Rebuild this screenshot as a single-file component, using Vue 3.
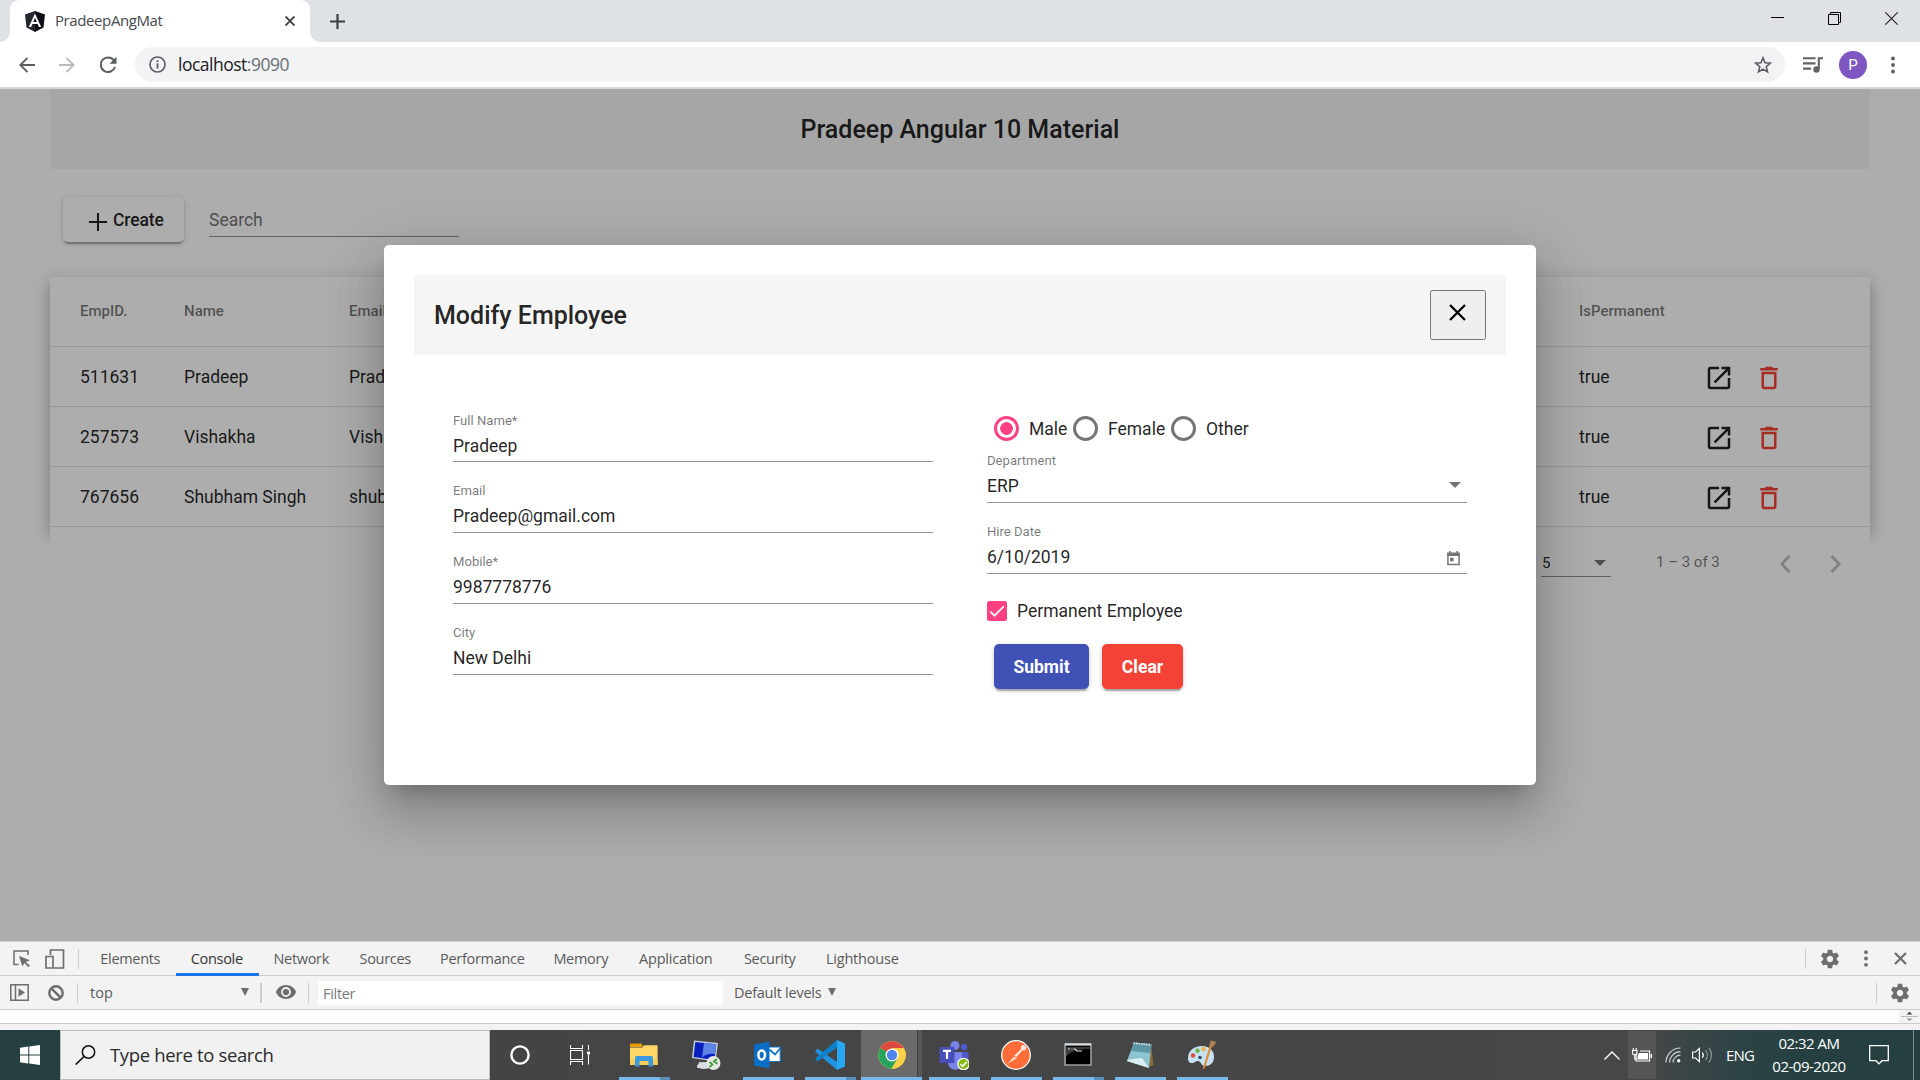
<script setup>
const rows = [
  { id: '511631', name: 'Pradeep', email: 'Pradeep@gmail.com' },
  { id: '257573', name: 'Vishakha', email: 'Vishakha@gmail.com' },
  { id: '767656', name: 'Shubham Singh', email: 'shubham@gmail.com' },
]
const fields = [
  { label: 'Full Name*', value: 'Pradeep', cls: 'first' },
  { label: 'Email', value: 'Pradeep@gmail.com', cls: 'clip' },
  { label: 'Mobile*', value: '9987778776', cls: '' },
  { label: 'City', value: 'New Delhi', cls: '' },
]
const tabs = [
  { t: 'Elements', w: 90, s: -0.32 },
  { t: 'Console', w: 83, s: -0.3, on: true },
  { t: 'Network', w: 86, s: -0.3 },
  { t: 'Sources', w: 82, s: -0.3 },
  { t: 'Performance', w: 112, s: -0.3 },
  { t: 'Memory', w: 85, s: -0.3 },
  { t: 'Application', w: 105, s: -0.2 },
  { t: 'Security', w: 83, s: -0.3 },
  { t: 'Lighthouse', w: 102, s: -0.2 },
]
</script>

<template>
  <div class="screen">
    <header class="browser">
      <div class="strip">
        <div class="tab">
          <svg class="fav" width="20" height="21" viewBox="0 0 20 21"><path d="M10 0 0 3.500 1.500 16.500 10 21z" fill="#23272f" /><path d="M10 0 20 3.500 18.500 16.500 10 21z" fill="#0b0e14" /><path d="M10 2.400 3.800 16h2.300l1.300-3.100h5.200l1.300 3.100h2.300zM8.200 11 10 6.700l1.800 4.300z" fill="#fff" /></svg>
          <span class="tab-name">PradeepAngMat</span>
          <svg class="tab-x" width="10" height="10" viewBox="0 0 10 10"><path d="M.5.500l9 9M9.500.500l-9 9" stroke="#3c4043" stroke-width="1.900" /></svg>
        </div>
        <svg class="plus" width="15" height="15" viewBox="0 0 15 15"><path d="M7.500 0v15M0 7.500h15" stroke="#3c4043" stroke-width="2.200" /></svg>
        <div class="win">
          <svg width="13" height="13" viewBox="0 0 13 13"><path d="M0 5.500h13" stroke="#000" /></svg>
          <svg width="13" height="13" viewBox="0 0 13 13"><path d="M.5 2.500h10v10H.5zM2.500 2.500V.5h10v10h-2" fill="none" stroke="#000" /></svg>
          <svg width="13" height="13" viewBox="0 0 13 13"><path d="M.3.300l12.400 12.400M12.700.300.3 12.700" stroke="#222" stroke-width="1.100" /></svg>
        </div>
      </div>
      <div class="bar">
        <svg class="nav" width="16" height="16" viewBox="0 0 16 16"><path d="M16 8H1.500M8.500.8 1.300 8l7.200 7.200" fill="none" stroke="#5a5d61" stroke-width="1.900" /></svg>
        <svg class="nav" width="16" height="16" viewBox="0 0 16 16"><path d="M0 8h14.500M7.500.8 14.700 8l-7.200 7.200" fill="none" stroke="#b9bbbe" stroke-width="1.900" /></svg>
        <svg class="nav" width="18" height="18" viewBox="0 0 18 18"><path d="M14.800 4.200A7.300 7.300 0 1 0 16 11" fill="none" stroke="#5a5d61" stroke-width="2" /><path d="M17.500.8v7h-7z" fill="#5a5d61" /></svg>
        <div class="omni">
          <svg width="17" height="17" viewBox="0 0 17 17"><circle cx="8.500" cy="8.500" r="7.500" fill="none" stroke="#5f6368" stroke-width="1.700" /><path d="M8.500 7.300v5.200M8.500 4.200v1.900" stroke="#5f6368" stroke-width="1.900" /></svg>
          <span class="url">localhost<i>:9090</i></span>
          <svg class="star" width="18" height="18" viewBox="0 0 18 18"><path d="M9 1.800l2 5 5.300.4-4.100 3.500 1.300 5.200L9 13.100l-4.500 2.800 1.300-5.200-4.100-3.500L7 6.800z" fill="none" stroke="#5a5d61" stroke-width="1.600" /></svg>
        </div>
        <svg class="queue" width="20" height="16" viewBox="0 0 20 16"><path d="M0 1.200h12.500M0 6.400h12.500M0 11.600h8M15.800 12V1.200H20" fill="none" stroke="#5f6368" stroke-width="2.100" /><circle cx="13.500" cy="12.500" r="3.200" fill="#5f6368" /></svg>
        <span class="avatar">P</span>
        <svg class="more" width="4" height="18" viewBox="0 0 4 18"><g fill="#5a5d61"><circle cx="2" cy="2.500" r="1.900" /><circle cx="2" cy="9" r="1.900" /><circle cx="2" cy="15.500" r="1.900" /></g></svg>
      </div>
    </header>

    <main class="page">
      <h1 class="app-title">Pradeep Angular 10 Material</h1>
      <div class="tools">
        <div class="create">
          <svg width="18" height="18" viewBox="0 0 18 18"><path d="M9 0v18M0 9h18" stroke="#000" stroke-opacity=".87" stroke-width="2" /></svg>
          <span>Create</span>
        </div>
        <div class="search">Search</div>
      </div>
      <section class="table">
        <div class="tr head"><span class="c1">EmpID.</span><span class="c2">Name</span><span class="c3">Email</span><span class="c4">IsPermanent</span></div>
        <div v-for="r in rows" :key="r.id" class="tr">
          <span class="c1">{{ r.id }}</span><span class="c2">{{ r.name }}</span><span class="c3">{{ r.email }}</span><span class="c4">true</span>
          <svg class="open" width="30" height="30" viewBox="0 0 24 24"><path d="M19 19H5V5h7V3H5c-1.110 0-2 .9-2 2v14c0 1.100.89 2 2 2h14c1.100 0 2-.9 2-2v-7h-2v7zM14 3v2h3.590l-9.830 9.830 1.410 1.410L19 6.410V10h2V3h-7z" fill="#212121" /></svg>
          <svg class="bin" width="30" height="30" viewBox="0 0 24 24"><path d="M6 19c0 1.100.9 2 2 2h8c1.100 0 2-.9 2-2V7H6v12zM8 9h8v10H8V9zm7.500-5l-1-1h-5l-1 1H5v2h14V4z" fill="#f44336" /></svg>
        </div>
      </section>
      <div class="pager">
        <div class="size"><span>5</span><i class="caret"></i></div>
        <span class="range">1 – 3 of 3</span>
        <svg class="prev" width="11" height="18" viewBox="0 0 11 18"><path d="M9.500 1 1.800 9l7.700 8" fill="none" stroke="#bdbdbd" stroke-width="2.600" /></svg>
        <svg width="11" height="18" viewBox="0 0 11 18"><path d="M1.500 1l7.700 8-7.700 8" fill="none" stroke="#bdbdbd" stroke-width="2.600" /></svg>
      </div>

      <div class="backdrop">
        <div class="dialog">
          <div class="dlg-head">
            <h2>Modify Employee</h2>
            <div class="close"><svg width="17" height="17" viewBox="0 0 17 17"><path d="M1 1l15 15M16 1 1 16" stroke="#000" stroke-width="2.300" /></svg></div>
          </div>
          <div class="form">
            <div class="col">
              <div v-for="f in fields" :key="f.label" class="field" :class="f.cls"><label>{{ f.label }}</label><div class="val"><span>{{ f.value }}</span></div></div>
            </div>
            <div class="col right">
              <div class="radios">
                <span class="radio on"></span><span class="rt r1">Male</span>
                <span class="radio"></span><span class="rt r2">Female</span>
                <span class="radio"></span><span class="rt">Other</span>
              </div>
              <div class="field dept"><label>Department</label><div class="val"><span>ERP</span><i class="caret"></i></div></div>
              <div class="field"><label>Hire Date</label><div class="val"><span>6/10/2019</span>
                <svg class="cal" width="13" height="15" viewBox="0 0 13 15"><path d="M.9 2.300h11.200v11.300H.9z" fill="none" stroke="#757575" stroke-width="1.500" /><path d="M.5 2h12v3H.5zM2 0h1.600v3H2zM9.400 0H11v3H9.400zM3 6.800h3.600v3.500H3z" fill="#757575" /></svg></div></div>
              <div class="check"><span class="box"><svg width="20" height="20" viewBox="0 0 24 24"><path d="M4.100 12.700 9 17.600 20.300 6.300" fill="none" stroke="#fff" stroke-width="2.100" /></svg></span>Permanent Employee</div>
              <div class="actions"><span class="btn submit">Submit</span><span class="btn clear">Clear</span></div>
            </div>
          </div>
        </div>
      </div>
    </main>

    <section class="dev">
      <div class="dev-tabs">
        <svg class="inspect" width="18" height="17" viewBox="0 0 18 17"><path d="M5.500 14.500H1V1h14v4" fill="none" stroke="#6e6e6e" stroke-width="1.500" /><path d="M6 6l11 4.300-4.200 1.800 4.200 3.700-1.600 1.300-4-4.100-2 3.500z" fill="#6e6e6e" /></svg>
        <svg class="device" width="20" height="20" viewBox="0 0 20 20"><path d="M5.500 6V1H18.500v18H9M1 7.500h7V19H1z" fill="none" stroke="#6e6e6e" stroke-width="1.700" /></svg>
        <i class="sep"></i>
        <div class="names"><span v-for="t in tabs" :key="t.t" :class="{ on: t.on }" :style="{ width: t.w + 'px', letterSpacing: t.s + 'px' }">{{ t.t }}</span></div>
        <i class="sep"></i>
        <svg class="gear" width="22" height="22" viewBox="0 0 24 24"><path d="M19.430 12.980c.04-.32.070-.64.070-.98s-.03-.66-.07-.98l2.110-1.650c.19-.15.24-.42.12-.64l-2-3.460c-.12-.22-.39-.3-.61-.22l-2.490 1c-.52-.4-1.080-.73-1.690-.98l-.38-2.650C14.460 2.180 14.250 2 14 2h-4c-.25 0-.46.18-.49.42l-.38 2.650c-.61.25-1.170.59-1.690.98l-2.490-1c-.23-.09-.49 0-.61.22l-2 3.460c-.13.22-.07.49.12.64l2.110 1.650c-.04.32-.07.65-.07.98s.03.66.07.98l-2.110 1.650c-.19.15-.24.42-.12.64l2 3.460c.12.22.39.3.61.22l2.490-1c.52.4 1.080.73 1.690.98l.38 2.650c.03.24.24.42.49.42h4c.25 0 .46-.18.49-.42l.38-2.650c.61-.25 1.170-.59 1.690-.98l2.490 1c.23.09.49 0 .61-.22l2-3.460c.12-.22.07-.49-.12-.64l-2.110-1.650zM12 15.500c-1.930 0-3.500-1.570-3.500-3.500s1.570-3.500 3.500-3.500 3.500 1.570 3.500 3.500-1.570 3.500-3.500 3.500z" fill="#6e6e6e" /></svg>
        <svg class="dots" width="4" height="17" viewBox="0 0 4 17"><g fill="#6e6e6e"><circle cx="2" cy="2.200" r="1.900" /><circle cx="2" cy="8.500" r="1.900" /><circle cx="2" cy="14.800" r="1.900" /></g></svg>
        <svg class="dx" width="13" height="13" viewBox="0 0 13 13"><path d="M1 1l11 11M12 1 1 12" stroke="#6e6e6e" stroke-width="2.200" /></svg>
      </div>
      <div class="dev-bar">
        <svg class="side" width="19" height="17" viewBox="0 0 19 17"><path d="M.8.800h17.400v15.400H.8zM5.500 1v15" fill="none" stroke="#6e6e6e" stroke-width="1.500" /><path d="M8.500 4.200 15 8.500l-6.500 4.300z" fill="#6e6e6e" /></svg>
        <svg class="ban" width="16" height="16" viewBox="0 0 16 16"><circle cx="8" cy="8" r="6.700" fill="none" stroke="#6e6e6e" stroke-width="2.500" /><path d="M3.300 3.300l9.400 9.400" stroke="#6e6e6e" stroke-width="2.500" /></svg>
        <i class="sep"></i>
        <span class="top">top</span><i class="tri"></i>
        <i class="sep s2"></i>
        <svg class="eye" width="20" height="14" viewBox="0 0 20 14"><path d="M10 0C5 0 1.300 3 0 7c1.300 4 5 7 10 7s8.700-3 10-7c-1.300-4-5-7-10-7z" fill="#6e6e6e" /><circle cx="10" cy="7" r="4" fill="none" stroke="#f3f3f3" stroke-width="1.800" /></svg>
        <i class="sep s3"></i>
        <span class="filter">Filter</span>
        <span class="levels">Default levels</span><i class="tri t2"></i>
        <i class="sep s4"></i>
        <svg width="22" height="22" viewBox="0 0 24 24"><path d="M19.430 12.980c.04-.32.070-.64.070-.98s-.03-.66-.07-.98l2.110-1.650c.19-.15.24-.42.12-.64l-2-3.460c-.12-.22-.39-.3-.61-.22l-2.490 1c-.52-.4-1.080-.73-1.690-.98l-.38-2.650C14.460 2.180 14.250 2 14 2h-4c-.25 0-.46.18-.49.42l-.38 2.650c-.61.25-1.170.59-1.690.98l-2.490-1c-.23-.09-.49 0-.61.22l-2 3.460c-.13.22-.07.49.12.64l2.110 1.650c-.04.32-.07.65-.07.98s.03.66.07.98l-2.110 1.650c-.19.15-.24.42-.12.64l2 3.460c.12.22.39.3.61.22l2.490-1c.52.4 1.080.73 1.690.98l.38 2.650c.03.24.24.42.49.42h4c.25 0 .46-.18.49-.42l.38-2.650c.61-.25 1.170-.59 1.690-.98l2.490 1c.23.09.49 0 .61-.22l2-3.460c.12-.22.07-.49-.12-.64l-2.110-1.650zM12 15.500c-1.930 0-3.500-1.570-3.500-3.500s1.570-3.500 3.500-3.500 3.500 1.570 3.500 3.500-1.570 3.500-3.500 3.500z" fill="#6e6e6e" /></svg>
      </div>
      <div class="dev-out"><div class="scroll"><svg width="17" height="13" viewBox="0 0 17 13"><path d="M5.500 4.500 8.500 1.700l3 2.800z" fill="#444" /><path d="M0 6.500h17" stroke="#bbb" /><path d="M5.500 8.500l3 2.700 3-2.700z" fill="#999" /></svg></div></div>
    </section>

    <footer class="task">
      <div class="start"><svg width="20" height="20" viewBox="0 0 20 20"><path d="M0 2.800 8.300 1.600v7.900H0zM9.300 1.400 20 0v9.500H9.300zM0 10.500h8.300v7.900L0 17.200zM9.300 10.500H20V20L9.300 18.600z" fill="#fff" /></svg></div>
      <div class="find"><svg width="21" height="20" viewBox="0 0 21 20"><circle cx="13.500" cy="7" r="6.200" fill="none" stroke="#111" stroke-width="1.500" /><path d="M9 11.500.7 19.500" stroke="#111" stroke-width="1.700" /></svg><span>Type here to search</span></div>
      <div class="sys"><svg width="20" height="20" viewBox="0 0 20 20"><circle cx="10" cy="10" r="8.600" fill="none" stroke="#fff" stroke-width="2.400" /></svg></div>
      <div class="sys"><svg width="20" height="20" viewBox="0 0 20 20"><path d="M.5 0v3.500h12V0M.5 20v-3.500h12V20M.5 5.500h12v9H.5zM18.500 0v5M18.500 10v9.500" fill="none" stroke="#fff" stroke-width="1.100" /><path d="M17 6.500h3v3h-3z" fill="#fff" /></svg></div>

      <div class="app go split"><svg width="30" height="30" viewBox="0 0 30 30"><path d="M1 3.500h11.500l1.500 3.500H1z" fill="#e49b08" /><path d="M1 7.500h12.500l1.500-2.200H28a.6.600 0 0 1 .6.600V25H1z" fill="#fdd665" /><path d="M1 20h27.600v5H1z" fill="#f9cd55" /><path d="M6 26.500V18a2 2 0 0 1 2-2h14a2 2 0 0 1 2 2v8.500h-4.500v-5.500h-9v5.500z" fill="#3b99e0" /></svg></div>
      <div class="app"><svg width="30" height="30" viewBox="0 0 30 30"><path d="M8 22h9l2 6H6z" fill="#c9ced6" /><ellipse cx="13" cy="26" rx="7" ry="3" fill="#d8dbe0" /><path d="M3 .5 27 3 24.500 21.500 1 18z" fill="#c7d0dd" /><path d="M4.300 2 25.300 4.200 23.300 20 2.600 16.900z" fill="#0a1fc0" /><path d="M13 2.900 25.300 4.200 24 14Q15 13 11 18z" fill="#5b84e4" /><circle cx="22.500" cy="23" r="7" fill="#e4e7e2" /><path d="M18.500 22l3 2.500-3 2.700M26 19l-3 2.500 3.500 2.200" fill="none" stroke="#3a9b35" stroke-width="1.700" /></svg></div>
      <div class="app go"><svg width="30" height="30" viewBox="0 0 30 30"><path d="M15 7h12.300v14.500H15z" fill="#fff" stroke="#0a72c7" stroke-width="1.200" /><path d="M16.500 9.500l5.500 5L27.500 8" fill="none" stroke="#0a72c7" stroke-width="1.700" /><path d="M1 4.500 16.500 1.500v27L1 25.500z" fill="#0a6ec4" /><ellipse cx="8.700" cy="15" rx="3.300" ry="4.500" fill="none" stroke="#fff" stroke-width="2.500" /></svg></div>
      <div class="app go split"><svg width="30" height="30" viewBox="0 0 30 30"><path d="M22 30 0 11.500 2.500 8.500 22 22z" fill="#1f94e0" /><path d="M22 0 0 18.500l2.500 3 19.500-14z" fill="#0f7fc8" /><path d="M22 0 30 3.500v23L22 30z" fill="#27a7f2" /></svg></div>
      <div class="app go active split"><svg width="28" height="28" viewBox="0 0 28 28"><circle cx="14" cy="14" r="13.700" fill="#fbcf46" /><path d="M14 14 2.200 7.100A13.700 13.700 0 0 1 25.900 7.200H14z" fill="#db4a3c" /><path d="M14 14 2.200 7.100A13.700 13.700 0 0 0 13.500 27.700L20 17z" fill="#28a35b" /><path d="M14 7.200h11.900A13.700 13.700 0 0 1 13.500 27.700L20 17z" fill="#fbcf46" /><circle cx="14" cy="14" r="6.500" fill="#fff" /><circle cx="14" cy="14" r="5.200" fill="#4c86ee" /></svg></div>
      <div class="app go"><svg width="30" height="30" viewBox="0 0 30 30"><circle cx="16" cy="5.500" r="4.500" fill="#7b83eb" /><circle cx="25" cy="7" r="3.200" fill="#5059c9" /><path d="M20 12h9.500v9a5 5 0 0 1-9 2z" fill="#5059c9" /><path d="M9 12h14v9a7 7 0 0 1-14 3z" fill="#7b83eb" /><path d="M.5 7h15v16H.5z" fill="#464eb8" /><path d="M4 10.800h8M8 10.800V19" stroke="#fff" stroke-width="2.200" /><circle cx="24.500" cy="24" r="5.700" fill="#86b810" stroke="#fff" stroke-width="1.200" /><path d="M21.500 24l2.200 2.300 4-4.300" fill="none" stroke="#fff" stroke-width="1.800" /></svg></div>
      <div class="app go"><svg width="30" height="30" viewBox="0 0 30 30"><circle cx="15" cy="15" r="14.300" fill="#ff6c37" stroke="#fff" stroke-width="1.300" /><path d="M6.500 24l6-7 3.500 1-4 2.500zM13 16l7.500-7.500 1.500 1.500-6.500 7z" fill="#fde4d9" /><circle cx="22.500" cy="7.700" r="2.600" fill="#fde4d9" /></svg></div>
      <div class="app go split"><svg width="30" height="30" viewBox="0 0 30 30"><path d="M2 4h26v21H2z" fill="#000" stroke="#9aa0a6" stroke-width="1.600" /><path d="M2 4.500h26" stroke="#d7dce0" stroke-width="2.200" /><path d="M3 7h24v2C14 9 8 11 3 17z" fill="#3a3a3a" /><path d="M5 9h2M8.500 9h1M11 8.500l3 2.500h5" fill="none" stroke="#ddd" stroke-width="1.200" /></svg></div>
      <div class="app go"><svg width="30" height="30" viewBox="0 0 30 30"><path d="M26 4 28.500 25 24 27z" fill="#8b6b3a" /><path d="M9 2.500 26.500 4 24 28 2 21z" fill="#8cc5cf" /><path d="M9 2.500 26.500 4 25.500 13 6 11z" fill="#5b98a4" /><path d="M2.800 19.500 17 18l7 10L2 21z" fill="#dceef1" /><path d="M8.500 3.200 26 5" stroke="#dfe7e8" stroke-width="1.500" stroke-dasharray="1.500 1" /></svg></div>
      <div class="app go"><svg width="30" height="30" viewBox="0 0 30 30"><path d="M1 18C1 10 8 6 15 6c8 0 12 5 12 11s-4 9-9 9c-4 0-4-5-7-5s-3 2-6 2-4-2-4-5z" fill="#c5e1f5" /><circle cx="6" cy="15.500" r="2.200" fill="#df4b3d" /><circle cx="10.500" cy="10.800" r="2.200" fill="#6db33f" /><circle cx="16.500" cy="9" r="2.200" fill="#f2b13c" /><circle cx="13" cy="17.500" r="1.800" fill="#3b4a59" /><path d="M15.500 29.500 23 5l2 1-7 22z" fill="#e08a32" /><path d="M22 6 24 .5l5.500 1.500L26 7z" fill="#b08050" /></svg></div>

      <div class="tray">
        <svg class="chev" width="16" height="9" viewBox="0 0 16 9"><path d="M.5 8.500 8 1l7.500 7.500" fill="none" stroke="#fff" stroke-width="1.400" /></svg>
        <div class="bat"><svg width="20" height="14" viewBox="0 0 20 14"><path d="M4 5.500V13h13.500V3H8" fill="none" stroke="#fff" stroke-width="1.200" /><path d="M7 5h9v6.500H5.500V8zM18.500 6H20v4h-1.500z" fill="#fff" /><path d="M.5 2.500h4.500v2.200a2.200 2.200 0 0 1-4.500 0zM1.300 0v2.500M4.200 0v2.500M2.700 6.500V11H5" fill="none" stroke="#fff" stroke-width="1.100" /></svg></div>
        <svg class="wifi" width="16" height="16" viewBox="0 0 16 16"><g fill="none" stroke="#c9cfcf" stroke-width="1.200"><path d="M1 15.500A14.500 14.500 0 0 1 15.500 1" /><path d="M4.500 15.500A11 11 0 0 1 15.500 4.700" /><path d="M8 15.500a7.500 7.500 0 0 1 7.500-7.300" /></g><circle cx="13.700" cy="13.700" r="1.700" fill="#fff" /></svg>
        <svg class="vol" width="21" height="18" viewBox="0 0 21 18"><path d="M.6 6h3L7.400 2.300v13.400L3.600 12h-3z" fill="none" stroke="#fff" stroke-width="1.200" /><path d="M10.300 6.500a4 4 0 0 1 0 5" fill="none" stroke="#fff" stroke-width="1.200" /><path d="M13.500 4a8 8 0 0 1 0 10M16.800 1.500a12 12 0 0 1 0 15" fill="none" stroke="#8d9a9a" stroke-width="1.200" /></svg>
        <span class="eng">ENG</span>
        <div class="clock"><span>02:32 AM</span><span>02-09-2020</span></div>
        <svg class="note" width="20" height="20" viewBox="0 0 20 20"><path d="M.7.700h18.600v15H13l-3 3.200-3-3.200H.7z" fill="none" stroke="#fff" stroke-width="1.300" /></svg>
      </div>
    </footer>
  </div>
</template>

<style>
body { margin: 0; overflow: hidden; }
</style>
<style scoped>
* { box-sizing: border-box; }
svg { display: block; flex: none; }
i { font-style: normal; }
.screen { width: 1920px; height: 1080px; display: flex; flex-direction: column; overflow: hidden; font-family: Roboto, sans-serif; white-space: nowrap; }
.browser, .dev, .task { font-family: "Open Sans", "Noto Sans", sans-serif; flex: none; }
.strip { height: 42px; background: #dee1e6; display: flex; padding-left: 10px; }
.tab { width: 300px; background: #fff; border-radius: 9px 9px 0 0; display: flex; align-items: center; padding: 0 15px; position: relative; }
.tab::before, .tab::after { content: ""; position: absolute; bottom: 0; width: 10px; height: 10px; }
.tab::before { left: -10px; background: radial-gradient(circle at 0 0, transparent 9.500px, #fff 10px); }
.tab::after { right: -10px; background: radial-gradient(circle at 100% 0, transparent 9.500px, #fff 10px); }
.tab-name { font-size: 15px; letter-spacing: -.4px; color: #45494d; margin-left: 10px; flex: 1; padding-bottom: 2px; }
.plus { margin: 14px 0 0 20px; }
.win { margin-left: auto; display: flex; gap: 44px; padding: 12px 22px 0 0; }
.bar { height: 47px; background: #fff; border-bottom: 2px solid #d7d8dd; display: flex; align-items: center; padding-left: 19px; }
.nav { margin-right: 24px; }
.nav + .nav + .nav { margin: 0 18px 0 0; }
.omni { width: 1650px; height: 35px; border-radius: 18px; background: #f1f3f4; display: flex; align-items: center; padding: 0 13px 0 14px; }
.url { font-size: 17.500px; letter-spacing: -.5px; margin-left: 12px; color: #202124; flex: 1; padding-bottom: 2px; }
.url i { color: #6c7074; }
.queue { margin-left: 18px; }
.avatar { width: 28px; height: 28px; margin-left: 16px; border-radius: 50%; background: #7e57c2; color: #fff; font: 15px/28px Roboto, sans-serif; text-align: center; }
.more { margin-left: 24px; }

.page { height: 852px; flex: none; background: #fff; position: relative; overflow: hidden; padding: 0 50px; color: rgba(0,0,0,.87); }
.app-title { height: 80px; margin: 0; background: #f5f5f5; font-size: 25px; font-weight: 500; line-height: 82px; text-align: center; }
.tools { display: flex; padding: 28px 0 0 13px; }
.create { width: 121px; height: 45px; border-radius: 5px; box-shadow: 0 4px 1px -2px rgba(0,0,0,.2), 0 2px 3px rgba(0,0,0,.14), 0 1px 6px rgba(0,0,0,.12); display: flex; align-items: center; padding-left: 26px; font-size: 17.500px; font-weight: 500; gap: 6px; letter-spacing: -.1px; }
.create svg { margin-top: 4px; }
.search { width: 250px; margin-left: 25px; height: 40px; border-bottom: 1px solid #8f8f8f; font-size: 17.500px; line-height: 46px; color: #757575; }
.table { margin-top: 35px; background: #fff; box-shadow: 0 6px 6px -4px rgba(0,0,0,.2), 0 10px 12px 1px rgba(0,0,0,.14), 0 4px 17px 3px rgba(0,0,0,.12); }
.tr { height: 60px; border-bottom: 1px solid #e0e0e0; display: flex; align-items: center; padding-left: 30px; font-size: 17.500px; }
.head { height: 70px; font-size: 15px; font-weight: 500; color: rgba(0,0,0,.54); padding-bottom: 2px; }
.c1 { width: 104px; } .c2 { width: 165px; } .c3 { width: 1230px; } .c4 { width: 125px; }
.open { margin: 2px 20px 0 0; } .bin { margin-top: 2px; }
.pager { position: relative; height: 70px; background: #fff; display: flex; align-items: center; padding-left: 1491px; font-size: 15px; color: rgba(0,0,0,.54); }
.size { width: 70px; height: 34px; margin-top: -5px; border-bottom: 1px solid #8f8f8f; display: flex; align-items: center; justify-content: space-between; padding: 7px 5px 0 1px; color: rgba(0,0,0,.87); }
.caret { border: 6.300px solid transparent; border-bottom: 0; border-top-color: #757575; }
.range { margin-left: 45px; width: 124px; }
.prev { margin-right: 39px; }
.pager svg { margin-top: 3px; }
.backdrop { position: absolute; inset: 0; background: rgba(0,0,0,.32); display: flex; justify-content: center; padding-top: 156px; }
.dialog { width: 1152px; height: 540px; background: #fff; border-radius: 5px; padding: 30px; box-shadow: 0 14px 19px -9px rgba(0,0,0,.2), 0 30px 48px 4px rgba(0,0,0,.14), 0 11px 58px 10px rgba(0,0,0,.12); }
.dlg-head { height: 80px; background: #f5f5f5; display: flex; align-items: center; justify-content: space-between; padding: 0 20px; }
h2 { margin: 0; font-size: 25px; font-weight: 500; }
.close { width: 56px; height: 50px; border: 1px solid #767676; border-radius: 2.500px; background: #efefef; display: flex; justify-content: center; padding: 13px 1px 0 0; }
.form { display: flex; padding: 37px 39px 0; gap: 54px; font-size: 17.500px; }
.col { width: 480px; }
.field { height: 71px; border-bottom: 1px solid #949494; display: flex; flex-direction: column; justify-content: flex-end; padding-bottom: 4px; }
.field.first { height: 70px; padding-bottom: 3px; }
.field label { font-size: 13.100px; line-height: 18px; color: rgba(0,0,0,.54); margin-bottom: 4px; }
.val { line-height: 24px; height: 24px; display: flex; justify-content: space-between; align-items: center; }
.clip .val { clip-path: inset(0 0 2.500px 0); }
.val .caret { margin: -2px 6px 0 0; }
.cal { margin: 2px 7px 0 0; }
.right { padding-top: 20px; }
.radios { height: 32px; display: flex; align-items: center; padding-left: 7px; }
.radio { width: 25px; height: 25px; border: 3px solid #757575; border-radius: 50%; margin-right: 10px; }
.radio.on { border-color: #ff4081; background: radial-gradient(circle, #ff4081 6px, #fff 6.600px); }
.rt { padding-top: 1px; }
.r1 { width: 44px; } .r2 { width: 63px; }
.field.dept { height: 59px; }
.check { display: flex; align-items: center; margin-top: 27px; height: 20px; }
.box { width: 20px; height: 20px; background: #ff4081; border-radius: 2.500px; margin-right: 10px; }
.actions { display: flex; gap: 13px; padding: 23px 0 0 7px; }
.btn { height: 45px; line-height: 46px; border-radius: 5px; color: #fff; font-weight: 700; text-align: center; box-shadow: 0 4px 1px -2px rgba(0,0,0,.2), 0 2px 3px rgba(0,0,0,.14), 0 1px 6px rgba(0,0,0,.12); }
.submit { width: 95px; background: #3f51b5; } .clear { width: 81px; background: #f44336; }

.dev { height: 89px; background: #f3f3f3; border-top: 1px solid #ccc; font-size: 14.500px; color: #5a5a5a; }
.dev-tabs { height: 34px; border-bottom: 1px solid #ccc; display: flex; align-items: center; padding-left: 13px; }
.device { margin-left: 14px; }
.sep { width: 1px; height: 20px; background: #ccc; margin-left: 13px; flex: none; }
.names { display: flex; height: 34px; margin: 0 auto 0 7px; align-self: flex-start; }
.names span { text-align: center; line-height: 33px; padding-right: 1.500px; }
.names .on { color: #333; border-bottom: 3px solid #1a73e8; }
.gear { margin-left: 13px; } .dots { margin-left: 23px; } .dx { margin: 0 13px 0 26px; }
.dev-bar { height: 34px; border-bottom: 1px solid #ccc; display: flex; align-items: center; padding: 0 9px 0 10px; }
.ban { margin-left: 19px; } .ban + .sep { margin-left: 13px; }
.top { margin-left: 12px; width: 151px; }
.tri { border: 4.500px solid transparent; border-top: 8px solid #6e6e6e; border-bottom: 0; margin-top: -2px; }
.s2 { margin-left: 11px; width: 2px; } .eye { margin: -1px 0 0 14px; } .s3 { margin-left: 12px; }
.filter { width: 405px; height: 24px; line-height: 26px; margin-left: 9px; padding-left: 5px; background: #fff; color: #7a7a7a; letter-spacing: -.3px; }
.levels { margin: 0 7px 0 11px; letter-spacing: -.25px; }
.s4 { margin: 0 12px 0 auto; }
.dev-out { height: 14px; background: #fff; border-bottom: 1px solid #ccc; display: flex; justify-content: flex-end; }
.scroll { width: 21px; background: #f3f3f3; padding-left: 2px; }

.task { height: 50px; display: flex; background: linear-gradient(90deg, #434343 0, #474747 1640px, #2d4345 1740px, #264042 1800px); color: #fff; }
.start { width: 60px; background: #264042; display: flex; align-items: center; justify-content: center; }
.find { width: 430px; background: #f1f1f1; border: 1px solid #bdbdbd; display: flex; align-items: center; padding-left: 14px; color: #2b2b2b; font-size: 18.500px; }
.find span { margin-left: 14px; letter-spacing: -.35px; padding-bottom: 2px; }
.sys { width: 60px; display: flex; align-items: center; justify-content: center; }
.sys + .app { margin-left: 3px; }
.app { width: 62px; display: flex; align-items: center; justify-content: center; position: relative; }
.go::after { content: ""; position: absolute; left: 6px; width: 51px; height: 3px; bottom: 0; background: #76b9ed; }
.split::after { background: linear-gradient(90deg, #76b9ed 41px, #5a8fb8 41px); }
.active { background: linear-gradient(90deg, #6a6a6a 56px, #3e3e3e 56px, #3e3e3e 57px, #575757 57px, #575757 61px, transparent 61px); }
.app svg { margin-right: 1px; }
.active::after { left: 0; width: 61px; background: #76b9ed; }
.tray { margin-left: auto; display: flex; align-items: center; width: 316px; }
.bat { margin-left: 8px; width: 28px; height: 48px; background: #555; display: flex; align-items: center; justify-content: center; }
.wifi { margin-left: 9px; } .vol { margin-left: 11px; }
.eng { margin-left: 13px; width: 32px; font-size: 15px; letter-spacing: -.8px; }
.clock { width: 102px; display: flex; flex-direction: column; text-align: center; font-size: 15px; line-height: 23px; letter-spacing: -.5px; }
.note { margin-left: 9px; }
.tray::after { content: ""; width: 1px; height: 50px; margin-left: 24px; background: #7d8c8c; }
</style>
